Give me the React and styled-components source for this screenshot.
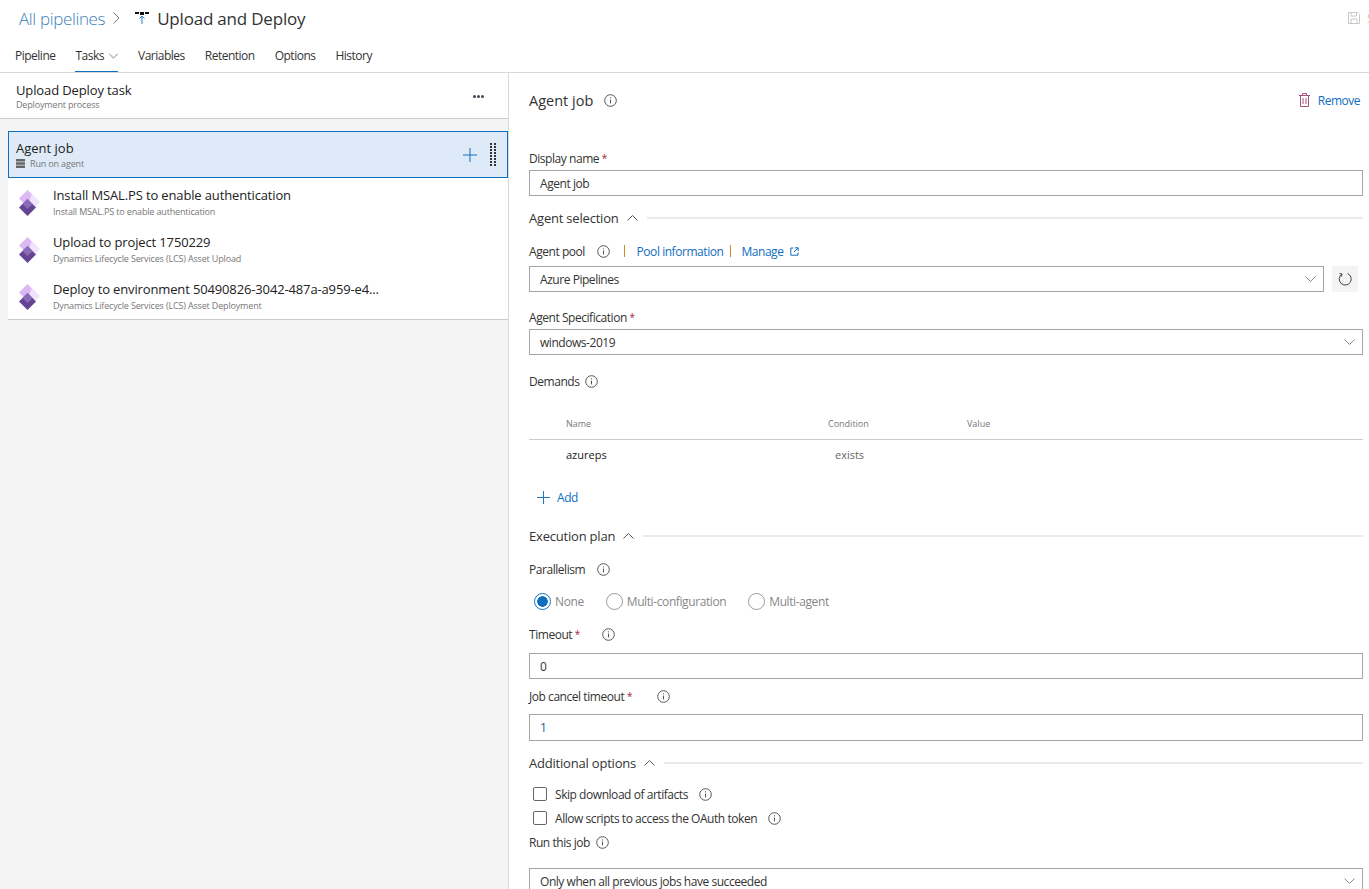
import React from "react"
import styled, { createGlobalStyle } from 'styled-components'

const GlobalStyle = createGlobalStyle`
  html, body { margin: 0; padding: 0; background: #fff; }
  body { font-family: "Open Sans", "Noto Sans", sans-serif; color: #333; }
  * { box-sizing: border-box; }
`

const Info = ({ size = 13 }) => (
  <InfoSvg width={size} height={size} viewBox="0 0 13 13">
    <circle cx="6.5" cy="6.5" r="5.8" fill="none" stroke="#555" strokeWidth="1" />
    <path d="M6.5 5.6v3.8M6.5 3.4v1" stroke="#555" strokeWidth="1" fill="none" />
  </InfoSvg>
)

const Chevron = ({ up, color = '#555', width = 11 }) => (
  <svg width={width} height="6" viewBox="0 0 11 6" style={{ flex: 'none' }}>
    <path d={up ? 'M.5 5.5l5-5 5 5' : 'M.5.5l5 5 5-5'} fill="none" stroke={color} strokeWidth="1" />
  </svg>
)

const Plus = ({ size }) => (
  <svg width={size} height={size} viewBox="0 0 14 14" style={{ flex: 'none' }}>
    <path d="M7 0v14M0 7h14" stroke="#106ebe" strokeWidth="1" fill="none" />
  </svg>
)

const TaskIcon = () => (
  <TaskIconSvg width="22" height="26" viewBox="0 0 22 26">
    <path d="M9.500 0l8.500 8.500-8.500 8.500L1 8.500z" fill="#dcb8f5" />
    <path d="M14 4l8 8-8 8-4-6z" fill="#f0e3fb" />
    <path d="M9.500 9l8.500 8.500-8.500 8.500L1 17.500z" fill="#654493" />
    <path d="M9.500 9l5 5-5 5-5-5z" fill="#8a6bb8" />
  </TaskIconSvg>
)

const tasks = [
  { name: 'Install MSAL.PS to enable authentication', sub: 'Install MSAL.PS to enable authentication' },
  { name: 'Upload to project 1750229', sub: 'Dynamics Lifecycle Services (LCS) Asset Upload' },
  { name: 'Deploy to environment 50490826-3042-487a-a959-e4...', sub: 'Dynamics Lifecycle Services (LCS) Asset Deployment' },
]

const tabs = ['Pipeline', 'Tasks', 'Variables', 'Retention', 'Options', 'History']

const App = () => {
  return (
    <Page>
      <GlobalStyle />
      <Header>
        <TitleRow>
          <Crumb>All pipelines</Crumb>
          <CrumbSep viewBox="0 0 7 12" width="7" height="12">
            <path d="M.5.5L6 6 .5 11.5" fill="none" stroke="#777" strokeWidth="1" />
          </CrumbSep>
          <svg width="14" height="14" viewBox="0 0 14 14" style={{ flex: 'none' }}>
            <path d="M0 1h4v2H0zM10 1h4v2h-4z" fill="#111" />
            <path d="M5 1h4v3H5z" fill="#111" />
            <path d="M7 13V5M4.500 7.500L7 5l2.500 2.500" stroke="#2a80c4" strokeWidth="1" fill="none" />
          </svg>
          <PageTitle>Upload and Deploy</PageTitle>
          <SaveBtn>
            <svg viewBox="0 0 12 12" width="12" height="12">
              <path d="M.5.5h9l2 2v9H.5zM3 .5v3.500h5.500V.5M3 11.500V7h6v4.500" fill="none" stroke="#c8c8c8" strokeWidth="1" />
            </svg>
            Save
          </SaveBtn>
        </TitleRow>
        <Tabs>
          {tabs.map(t => (
            <Tab key={t} active={t === 'Tasks'}>
              {t}
              {t === 'Tasks' && <Chevron color="#666" width={9} />}
            </Tab>
          ))}
        </Tabs>
      </Header>

      <Body>
        <LeftPanel>
          <ProcessHead>
            <div>
              <ProcessTitle>Upload Deploy task</ProcessTitle>
              <Sub>Deployment process</Sub>
            </div>
            <Dots>
              <i /><i /><i />
            </Dots>
          </ProcessHead>

          <JobCard>
            <div>
              <JobTitle>Agent job</JobTitle>
              <JobSub>
                <svg width="9" height="9" viewBox="0 0 9 9">
                  <path d="M0 0h9v2.500H0zM0 3.200h9v2.500H0zM0 6.400h9V9H0z" fill="#666" />
                </svg>
                <Sub>Run on agent</Sub>
              </JobSub>
            </div>
            <JobActions>
              <Plus size={14} />
              <DragHandle>
                {Array.from({ length: 16 }).map((_, i) => <i key={i} />)}
              </DragHandle>
            </JobActions>
          </JobCard>

          <TaskList>
            {tasks.map(t => (
              <TaskRow key={t.name}>
                <TaskIcon />
                <TaskText>
                  <TaskName>{t.name}</TaskName>
                  <Sub>{t.sub}</Sub>
                </TaskText>
              </TaskRow>
            ))}
          </TaskList>
        </LeftPanel>

        <RightPanel>
          <PanelHead>
            <Heading>Agent job</Heading>
            <Info />
            <RemoveBtn>
              <svg width="11" height="14" viewBox="0 0 11 14">
                <path d="M0 2.500h11M3.500 2.500V.5h4v2M1.500 2.500v11h8v-11M4 5v6M7 5v6" fill="none" stroke="#a4547a" strokeWidth="1" />
              </svg>
              Remove
            </RemoveBtn>
          </PanelHead>

          <LabelRow top={20}>Display name <Req>*</Req></LabelRow>
          <TextBox>Agent job</TextBox>

          <Section top={12}>Agent selection <Chevron up /><Rule /></Section>

          <LabelRow top={14}>
            Agent pool <InfoGap left={9}><Info /></InfoGap>
            <Pipe left={14} /> <LinkText left={12}>Pool information</LinkText>
            <Pipe left={7} /> <LinkText left={10}>Manage</LinkText>
            <svg width="9" height="9" viewBox="0 0 9 9" style={{ marginLeft: 7 }}>
              <path d="M3.500 1H.8v7.200H8V5.500M5 .8h3.200V4M8 1L4 5" fill="none" stroke="#106ebe" strokeWidth="1" />
            </svg>
          </LabelRow>
          <PoolRow>
            <TextBox grow top={6}>
              Azure Pipelines
              <Chevron color="#888" />
            </TextBox>
            <RefreshBtn>
              <svg width="14" height="14" viewBox="0 0 14 14">
                <path d="M4 2A6 6 0 1 0 9.500 1.500" fill="none" stroke="#444" strokeWidth="1" />
                <path d="M1.500 1.500L4 2 3.500 4.500" fill="none" stroke="#444" strokeWidth="1" />
              </svg>
            </RefreshBtn>
          </PoolRow>

          <LabelRow top={16}>Agent Specification <Req>*</Req></LabelRow>
          <TextBox>windows-2019<Chevron color="#888" /></TextBox>

          <LabelRow top={17}>Demands <InfoGap left={3}><Info /></InfoGap></LabelRow>

          <DemandHead>
            <span>Name</span><span>Condition</span><span>Value</span>
          </DemandHead>
          <DemandRow>
            <DemandName>azureps</DemandName><DemandCond>exists</DemandCond><span />
          </DemandRow>
          <AddBtn><Plus size={13} />Add</AddBtn>

          <Section top={20}>Execution plan <Chevron up /><Rule /></Section>

          <LabelRow top={14}>Parallelism <InfoGap left={9}><Info /></InfoGap></LabelRow>
          <RadioRow>
            <RadioItem><RadioDot checked />None</RadioItem>
            <RadioItem><RadioDot />Multi-configuration</RadioItem>
            <RadioItem><RadioDot />Multi-agent</RadioItem>
          </RadioRow>

          <LabelRow top={15}>Timeout <Req>*</Req> <InfoGap left={22}><Info /></InfoGap></LabelRow>
          <TextBox top={10}>0</TextBox>
          <LabelRow top={8}>Job cancel timeout <Req>*</Req> <InfoGap left={25}><Info /></InfoGap></LabelRow>
          <TextBox top={9} tall blue>1</TextBox>

          <Section top={12}>Additional options <Chevron up /><Rule /></Section>

          <CheckRow top={11}><CheckBox />Skip download of artifacts <InfoGap left={3}><Info /></InfoGap></CheckRow>
          <CheckRow top={4}><CheckBox />Allow scripts to access the OAuth token <InfoGap left={3}><Info /></InfoGap></CheckRow>
          <LabelRow top={5}>Run this job <InfoGap left={3}><Info /></InfoGap></LabelRow>
          <TextBox top={17}>Only when all previous jobs have succeeded<Chevron color="#888" /></TextBox>
        </RightPanel>
      </Body>
    </Page>
  )
}

export default App

const Page = styled.div`
  width: 100%;
  height: 100vh;
  overflow: hidden;
  display: flex;
  flex-direction: column;
`

const Header = styled.div`
  height: 73px;
  flex: none;
  border-bottom: 1px solid #d8d8d8;
  padding-left: 15px;
`

const TitleRow = styled.div`
  display: flex;
  align-items: center;
  height: 38px;
  padding: 0 0 2px 4px;
`

const Crumb = styled.span`
  font-size: 17px;
  color: #3b7fb5;
  font-weight: 300;
  letter-spacing: -0.35px;
`

const CrumbSep = styled.svg`
  margin: 0 15px 0 8px;
  flex: none;
`

const PageTitle = styled.span`
  font-size: 17px;
  color: #333;
  margin-left: 8px;
  letter-spacing: -0.2px;
`

const SaveBtn = styled.div`
  margin-left: auto;
  margin-right: -24px;
  display: flex;
  align-items: center;
  gap: 7px;
  font-size: 12px;
  color: #c8c8c8;
`

const Tabs = styled.div`
  display: flex;
  gap: 20px;
  height: 34px;
`

const Tab = styled.div`
  display: flex;
  align-items: center;
  gap: 5px;
  height: 34px;
  padding-top: 2px;
  font-size: 12px;
  letter-spacing: -0.5px;
  color: #333;
  border-bottom: 1px solid ${({ active }) => active ? '#106ebe' : 'transparent'};
`

const Body = styled.div`
  flex: 1;
  display: flex;
  min-height: 0;
`

const LeftPanel = styled.div`
  width: 509px;
  flex: none;
  background: #f4f4f4;
  border-right: 1px solid #d8d8d8;
`

const ProcessHead = styled.div`
  height: 46px;
  background: #fff;
  border-bottom: 1px solid #ccc;
  display: flex;
  align-items: center;
  justify-content: space-between;
  padding: 2px 24px 0 16px;
`

const ProcessTitle = styled.div`
  font-size: 13px;
  line-height: 17px;
  letter-spacing: -0.12px;
  color: #222;
`

const Sub = styled.div`
  font-size: 9px;
  line-height: 12px;
  letter-spacing: -0.16px;
  color: #777;
`

const Dots = styled.div`
  display: flex;
  gap: 1px;
  i {
    width: 3px;
    height: 3px;
    border-radius: 50%;
    background: #445;
  }
`

const JobCard = styled.div`
  margin: 12px 0 0 8px;
  height: 47px;
  width: 500px;
  background: #deeaf7;
  border: 1px solid #106ebe;
  display: flex;
  align-items: center;
  justify-content: space-between;
  padding: 0 11px 0 7px;
`

const JobTitle = styled.div`
  font-size: 13px;
  line-height: 17px;
  color: #222;
`

const JobSub = styled.div`
  display: flex;
  align-items: center;
  gap: 5px;
  margin-top: 1px;
`

const JobActions = styled.div`
  display: flex;
  align-items: center;
  gap: 13px;
`

const DragHandle = styled.div`
  display: grid;
  grid-template-columns: 2px 2px;
  gap: 1px 2px;
  i {
    width: 2px;
    height: 2px;
    background: #333;
  }
`

const TaskList = styled.div`
  margin-left: 8px;
  width: 500px;
  height: 142px;
  background: #fff;
  border-bottom: 1px solid #ccc;
`

const TaskRow = styled.div`
  height: 47px;
  display: flex;
  align-items: center;
  gap: 13px;
  padding-left: 10px;
`

const TaskIconSvg = styled.svg`
  flex: none;
  margin-top: 3px;
`

const TaskText = styled.div`
  display: flex;
  flex-direction: column;
  gap: 2px;
`

const TaskName = styled.div`
  font-size: 13px;
  line-height: 18px;
  letter-spacing: -0.14px;
  color: #222;
`

const RightPanel = styled.div`
  flex: 1;
  min-width: 0;
  padding: 0 6px 0 20px;
`

const PanelHead = styled.div`
  height: 56px;
  padding-bottom: 2px;
  display: flex;
  align-items: center;
  gap: 11px;
`

const Heading = styled.span`
  font-size: 14.500px;
  color: #333;
`

const RemoveBtn = styled.div`
  margin-left: auto;
  display: flex;
  align-items: center;
  gap: 8px;
  font-size: 12px;
  letter-spacing: -0.5px;
  color: #106ebe;
  margin-right: 3px;
`

const LabelRow = styled.div`
  display: flex;
  align-items: center;
  margin-top: ${({ top }) => top || 0}px;
  height: 18px;
  font-size: 12px;
  letter-spacing: -0.45px;
  color: #333;
  white-space: pre;
`

const Req = styled.span`
  color: #a4262c;
  font-size: 10px;
`

const InfoSvg = styled.svg`
  flex: none;
  display: block;
`

const InfoGap = styled.span`
  margin-left: ${({ left }) => left}px;
`

const Pipe = styled.span`
  margin-left: ${({ left }) => left}px;
  width: 1px;
  height: 12px;
  background: #d28a2a;
`

const LinkText = styled.span`
  margin-left: ${({ left }) => left}px;
  color: #106ebe;
`

const TextBox = styled.div`
  margin-top: ${({ top }) => top ?? 3}px;
  height: ${({ tall }) => tall ? 27 : 26}px;
  flex: ${({ grow }) => grow ? 1 : 'none'};
  border: 1px solid #a6a6a6;
  display: flex;
  align-items: center;
  justify-content: space-between;
  padding: 0 7px 0 10px;
  font-size: 12px;
  letter-spacing: -0.45px;
  color: ${({ blue }) => blue ? '#1b5f94' : '#333'};
`

const PoolRow = styled.div`
  display: flex;
  align-items: flex-end;
  gap: 8px;
`

const RefreshBtn = styled.div`
  width: 26px;
  height: 26px;
  background: #f4f4f4;
  display: flex;
  align-items: center;
  justify-content: center;
  margin-right: 5px;
  flex: none;
`

const Section = styled.div`
  display: flex;
  align-items: center;
  gap: 8px;
  margin-top: ${({ top }) => top}px;
  height: 20px;
  font-size: 13px;
  letter-spacing: -0.2px;
  color: #333;
`

const Rule = styled.span`
  flex: 1;
  height: 2px;
  background: #eaeaea;
  margin-left: 1px;
`

const DemandHead = styled.div`
  margin-top: 25px;
  height: 25px;
  display: grid;
  grid-template-columns: 262px 139px 1fr;
  padding: 0 0 8px 37px;
  align-items: center;
  font-size: 9px;
  color: #777;
  border-bottom: 1px solid #ccc;
`

const DemandRow = styled.div`
  height: 30px;
  padding-bottom: 2px;
  display: grid;
  grid-template-columns: 269px 139px 1fr;
  padding-left: 37px;
  align-items: center;
  font-size: 11px;
`

const DemandName = styled.span`
  color: #222;
`

const DemandCond = styled.span`
  color: #666;
`

const AddBtn = styled.div`
  margin-top: 18px;
  height: 18px;
  display: flex;
  align-items: center;
  gap: 7px;
  padding-left: 8px;
  font-size: 12px;
  letter-spacing: -0.45px;
  color: #106ebe;
`

const RadioRow = styled.div`
  display: flex;
  gap: 22px;
  margin-top: 14px;
  padding-left: 5px;
  height: 18px;
`

const RadioItem = styled.div`
  display: flex;
  align-items: center;
  gap: 4px;
  font-size: 12px;
  letter-spacing: -0.4px;
  color: #888;
`

const RadioDot = styled.span`
  width: 17px;
  height: 17px;
  border-radius: 50%;
  border: 1px solid ${({ checked }) => checked ? '#106ebe' : '#999'};
  background: ${({ checked }) => checked ? 'radial-gradient(circle, #106ebe 0 5px, #fff 5.500px)' : '#fff'};
`

const CheckRow = styled.div`
  display: flex;
  align-items: center;
  margin-top: ${({ top }) => top}px;
  height: 20px;
  padding-left: 4px;
  gap: 8px;
  font-size: 12px;
  letter-spacing: -0.45px;
  color: #333;
`

const CheckBox = styled.span`
  width: 14px;
  height: 14px;
  border: 1px solid #666;
  border-radius: 2px;
`
